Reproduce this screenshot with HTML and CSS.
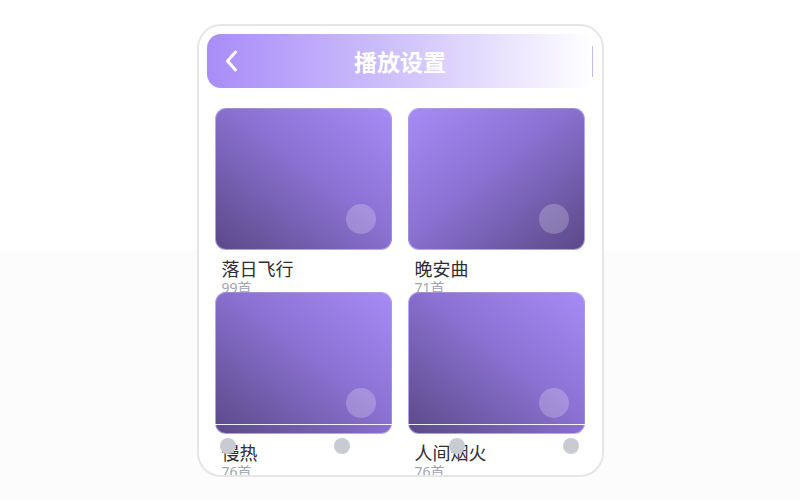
FILE: index.html
```html
<!DOCTYPE html>
<html lang="zh">
<head>
    <meta charset="UTF-8">
    <meta name="viewport" content="width=device-width, initial-scale=1.0">
    <title>播放设置</title>
    <link rel="stylesheet" href="styles.css">
</head>
<body>
    <!-- Телефон -->
    <div class="phone">
        <!-- Шапка -->
        <div class="header">
            <svg class="back" width="18" height="24" viewBox="0 0 18 24">
                <path d="M12.5 3 L4.5 12 L12.5 21" fill="none" stroke="#fff" stroke-width="3" stroke-linecap="round" stroke-linejoin="round"/>
            </svg>
            <h1 class="title">播放设置</h1>
        </div>
        <!-- Плейлисты -->
        <div class="grid">
            <div class="item">
                <div class="cover cover-a"><span class="play"></span></div>
                <div class="name">落日飞行</div>
                <div class="count">99首</div>
            </div>
            <div class="item">
                <div class="cover cover-b"><span class="play"></span></div>
                <div class="name">晚安曲</div>
                <div class="count">71首</div>
            </div>
            <div class="item">
                <div class="cover cover-a"><span class="play"></span></div>
                <div class="name">慢热</div>
                <div class="count">76首</div>
            </div>
            <div class="item">
                <div class="cover cover-a"><span class="play"></span></div>
                <div class="name">人间烟火</div>
                <div class="count">76首</div>
            </div>
        </div>
        <!-- Нижнее меню -->
        <div class="tabbar">
            <span class="dot"></span>
            <span class="dot"></span>
            <span class="dot"></span>
            <span class="dot"></span>
        </div>
    </div>
</body>
</html>
```

FILE: styles.css
```css
body {
    margin: 0;
    height: 500px;
    background: linear-gradient(to bottom, #ffffff 250px, #fcfcfd 250px);
    font-family: "Noto Sans", "Noto Sans CJK SC", sans-serif;
}
.phone {
    position: relative;
    width: 403px;
    height: 449px;
    margin: 24px auto 0;
    border: 2px solid #e6e6e9;
    border-radius: 24px;
    overflow: hidden;
    background-color: #fff;
    background-image: linear-gradient(#e8e8eb, #e8e8eb);
    background-repeat: no-repeat;
    background-size: 384px 1px;
    background-position: 9px 398px;
}
.header {
    position: relative;
    display: flex;
    align-items: center;
    justify-content: center;
    height: 54px;
    margin: 8px 8px 0 8px;
    border-radius: 14px;
    background: linear-gradient(to right, #a98cf8, #cbbdfb 45%, #ffffff);
}
.header::after {
    content: "";
    position: absolute;
    right: 1px;
    top: 12px;
    bottom: 11px;
    width: 1px;
    background: #c9bbfb;
}
.back {
    position: absolute;
    left: 16px;
    top: 15px;
}
.title {
    margin: 0;
    color: #fff;
    font-size: 23px;
    font-weight: 700;
}
.grid {
    display: grid;
    grid-template-columns: 1fr 1fr;
    grid-auto-rows: 184px;
    column-gap: 16px;
    padding: 20px 17px 0 16px;
}
.item {
    min-width: 0;
}
.cover {
    display: flex;
    justify-content: flex-end;
    align-items: flex-end;
    height: 142px;
    padding: 0 15px 15px 0;
    box-sizing: border-box;
    border: 1px solid rgba(200, 186, 252, 0.6);
    border-radius: 11px;
}
.cover-a {
    background: linear-gradient(to bottom left, #a68bf6, #8b71d2 45%, #5a4a88);
}
.cover-b {
    background: linear-gradient(to bottom right, #a68bf6, #8b71d2 45%, #5a4a88);
}
.play {
    width: 30px;
    height: 30px;
    border-radius: 50%;
    background: rgba(255, 255, 255, 0.22);
}
.name {
    margin-top: 8px;
    padding-left: 7px;
    font-size: 18px;
    line-height: 22px;
    color: #2e2e33;
}
.count {
    padding-left: 7px;
    font-size: 14px;
    line-height: 15px;
    color: #a2a5ad;
}
.tabbar {
    position: absolute;
    left: 9px;
    right: 10px;
    top: 398px;
    display: flex;
    justify-content: space-between;
    padding: 13px 12px 0;
    border-top: 1px solid rgba(255, 255, 255, 0.9);
}
.dot {
    width: 16px;
    height: 16px;
    border-radius: 50%;
    background: #c8cbd2;
}
```
